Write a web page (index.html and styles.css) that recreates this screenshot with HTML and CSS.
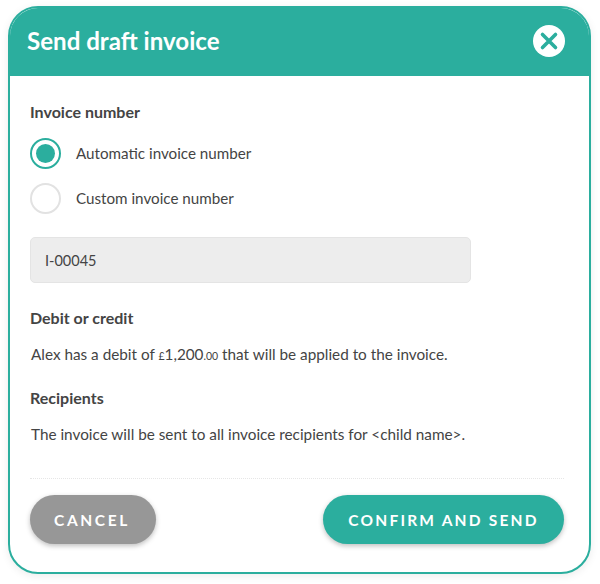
FILE: index.html
```html
<!DOCTYPE html>
<html lang="en">
<head>
<meta charset="utf-8">
<title>Send draft invoice</title>
<link rel="stylesheet" href="styles.css">
</head>
<body>
<main class="modal">
  <header class="modal-head">
    <h1 class="modal-title">Send draft invoice</h1>
    <button class="close" aria-label="Close">
      <svg viewBox="0 0 32 32" width="32" height="32"><circle cx="16" cy="16" r="16" fill="#fff"/><path d="M9.5 9.5 22.5 22.5M22.5 9.5 9.5 22.5" stroke="#2bae9e" stroke-width="3.6" stroke-linecap="round"/></svg>
    </button>
  </header>
  <div class="modal-body">
    <h2 class="label">Invoice number</h2>
    <div class="radios">
      <div class="radio-row"><span class="radio radio-on"><span class="dot"></span></span><span class="radio-text">Automatic invoice number</span></div>
      <div class="radio-row"><span class="radio"></span><span class="radio-text">Custom invoice number</span></div>
    </div>
    <div class="field">I-00045</div>
    <h2 class="label label-debit">Debit or credit</h2>
    <p class="copy">Alex has a debit of <span class="pence">£</span>1,200<span class="pence">.00</span> that will be applied to the invoice.</p>
    <h2 class="label label-recipients">Recipients</h2>
    <p class="copy">The invoice will be sent to all invoice recipients for &lt;child name&gt;.</p>
    <div class="rule"></div>
    <div class="actions">
      <button class="btn btn-cancel">CANCEL</button>
      <button class="btn btn-confirm">CONFIRM AND SEND</button>
    </div>
  </div>
</main>
</body>
</html>
```
FILE: styles.css
```css
* { box-sizing: border-box; }
html, body { margin: 0; height: 100%; background: #fff; }
body {
  padding: 6px 8px 0 8px;
  font-family: Lato, "Open Sans", sans-serif;
  color: #444;
  overflow: hidden;
}
.modal {
  width: 583px;
  height: 568px;
  border: 2px solid #2bae9e;
  border-radius: 30px;
  background: #fff;
  box-shadow: 0 2px 8px rgba(0,0,0,.08);
  overflow: hidden;
}
.modal-head {
  height: 69px;
  background: #2bae9e;
  display: flex;
  align-items: center;
  justify-content: space-between;
  padding: 0 8px 2px 18px;
  margin: -1px -1px 0;
}
.modal-title {
  margin: 0;
  font-size: 24.1px;
  font-weight: 700;
  color: #fff;
}
.close {
  padding: 0;
  border: 0;
  background: none;
  display: flex;
  margin-right: 17px;
}
.modal-body { padding: 26px 25px 0 20px; }
.label {
  margin: 0;
  font-size: 16px;
  line-height: 20px;
  font-weight: 700;
  color: #444;
}
.radios { margin-top: 16px; display: flex; flex-direction: column; gap: 15px; }
.radio-row { display: flex; align-items: center; gap: 15px; height: 30px; }
.radio {
  width: 31px;
  height: 31px;
  border-radius: 50%;
  border: 2px solid #e2e2e2;
  background: #fff;
  display: flex;
  align-items: center;
  justify-content: center;
  flex: none;
}
.radio-on { border-color: #2bae9e; }
.dot { width: 19px; height: 19px; border-radius: 50%; background: #2bae9e; }
.radio-text { font-size: 15.2px; }
.field {
  margin-top: 24px;
  width: 441px;
  height: 46px;
  background: #ededed;
  border: 1px solid #e4e4e4;
  border-radius: 5px;
  padding-left: 14px;
  display: flex;
  align-items: center;
  font-size: 14.5px;
}
.label-debit { margin-top: 25px; }
.label-recipients { margin-top: 22px; }
.copy { margin: 16px 0 0 1px; font-size: 15.3px; line-height: 20px; }
.pence { font-size: 10.5px; }
.rule { margin-top: 34px; border-top: 1px dotted #e6e6e6; }
.actions { margin-top: 16px; display: flex; justify-content: space-between; }
.btn {
  height: 49px;
  border: 0;
  border-radius: 25px;
  color: #fff;
  font-family: inherit;
  font-size: 15.5px;
  font-weight: 700;
  letter-spacing: 2.2px;
  box-shadow: 0 2px 5px rgba(0,0,0,.25);
}
.btn-cancel { width: 126px; background: #979797; letter-spacing: 2.6px; padding: 0 8px 0 6px; }
.btn-confirm { width: 241px; background: #2bae9e; }
```
